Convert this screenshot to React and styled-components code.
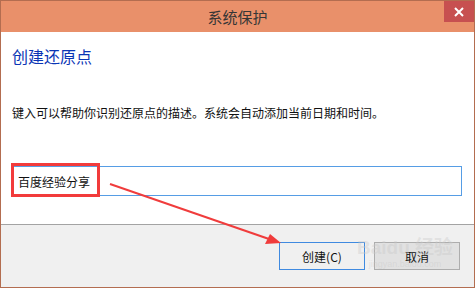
import React from 'react'
import styled, { createGlobalStyle } from 'styled-components'

const GlobalStyle = createGlobalStyle`
  html, body {
    margin: 0;
    padding: 0;
    background: #ffffff;
  }
  body {
    font-family: "Noto Sans CJK SC", "Liberation Sans", sans-serif;
  }
`

const Window = styled.div`
  position: relative;
  box-sizing: border-box;
  width: 475px;
  height: 288px;
  border: 1px solid #b36d50;
  display: flex;
  flex-direction: column;
  background: #ffffff;
  overflow: hidden;
`

const TitleBar = styled.div`
  position: relative;
  height: 31px;
  flex: 0 0 31px;
  background: #e9906a;
  display: flex;
  align-items: center;
  justify-content: center;
  font-size: 15px;
  color: #363636;
`

const CloseButton = styled.div`
  position: absolute;
  top: 0;
  right: 0;
  width: 30px;
  height: 21px;
  background: #c75050;
  display: flex;
  align-items: center;
  justify-content: center;
`

const Content = styled.div`
  flex: 1;
  padding: 14px 12px 0 11px;
  display: flex;
  flex-direction: column;
`

const Heading = styled.div`
  font-size: 16px;
  line-height: 20px;
  color: #0a35b5;
`

const Description = styled.div`
  margin-top: 39px;
  font-size: 12px;
  line-height: 16px;
  color: #111111;
`

const Input = styled.div`
  box-sizing: border-box;
  margin-top: 45px;
  height: 30px;
  border: 1px solid #569de5;
  padding: 0 5px;
  display: flex;
  align-items: center;
  font-size: 12px;
  color: #111111;
`

const Footer = styled.div`
  flex: 0 0 63px;
  box-sizing: border-box;
  border-top: 1px solid #a3a3a3;
  background: #f0f0f0;
  display: flex;
  justify-content: flex-end;
  align-items: flex-start;
  gap: 9px;
  padding: 17px 14px 0 0;
`

const Button = styled.div`
  box-sizing: border-box;
  width: 86px;
  height: 28px;
  display: flex;
  align-items: center;
  justify-content: center;
  font-size: 12px;
  color: #111111;
  background: ${(p) => (p.primary ? '#f0f0f0' : '#e1e1e1')};
  border: 1px solid ${(p) => (p.primary ? '#3f8ae0' : '#adadad')};
`

const Highlight = styled.div`
  position: absolute;
  left: 10px;
  top: 162px;
  width: 89px;
  height: 34px;
  box-sizing: border-box;
  border: 3px solid #f23b3b;
`

const Overlay = styled.svg`
  position: absolute;
  left: 0;
  top: 0;
  pointer-events: none;
`

const Watermark = styled.div`
  position: absolute;
  left: 356px;
  top: 236px;
  color: rgba(200, 200, 200, 0.4);
  font-family: "Liberation Sans", "Noto Sans CJK SC", sans-serif;
  pointer-events: none;
  text-align: center;
  white-space: nowrap;
`

const WatermarkLogo = styled.div`
  font-size: 19px;
  font-weight: bold;
  line-height: 22px;
`

const WatermarkUrl = styled.div`
  font-size: 9px;
  line-height: 11px;
`

const App = () => (
  <>
    <GlobalStyle />
    <Window>
      <TitleBar>
        系统保护
        <CloseButton>
          <svg width="10" height="10" viewBox="0 0 10 10">
            <path d="M1 1 L9 9 M9 1 L1 9" stroke="#ffffff" strokeWidth="2" />
          </svg>
        </CloseButton>
      </TitleBar>
      <Content>
        <Heading>创建还原点</Heading>
        <Description>键入可以帮助你识别还原点的描述。系统会自动添加当前日期和时间。</Description>
        <Input>百度经验分享</Input>
      </Content>
      <Footer>
        <Button primary>创建(C)</Button>
        <Button>取消</Button>
      </Footer>
      <Highlight />
      <Watermark>
        <WatermarkLogo>Baidu 经验</WatermarkLogo>
        <WatermarkUrl>jingyan.baidu.com</WatermarkUrl>
      </Watermark>
      <Overlay width="475" height="288">
        <line x1="109" y1="183" x2="268" y2="238" stroke="#f03c3c" strokeWidth="2" />
        <polygon points="280,242 264,243 269,233" fill="#f03c3c" />
      </Overlay>
    </Window>
  </>
)

export default App
